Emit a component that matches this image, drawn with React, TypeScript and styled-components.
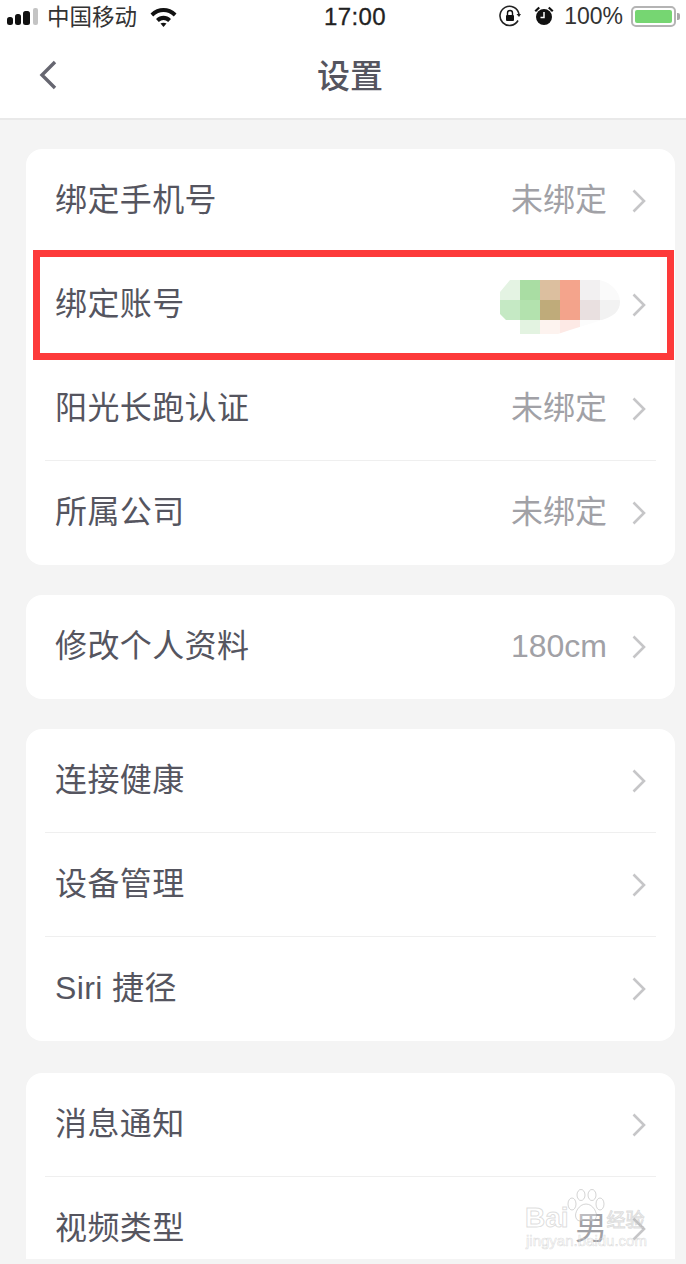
import React from "react";
import styled, { createGlobalStyle } from "styled-components";

interface RowData {
  label: string;
  value?: string;
  masked?: boolean;
}

const GlobalStyle = createGlobalStyle`
  html, body {
    margin: 0;
    padding: 0;
    background: #f4f4f4;
  }
  * {
    box-sizing: border-box;
  }
`;

const Page = styled.div`
  position: relative;
  width: 686px;
  height: 1264px;
  overflow: hidden;
  background: #f4f4f4;
  font-family: "Liberation Sans", "Noto Sans CJK SC", sans-serif;
`;

const Top = styled.header`
  height: 120px;
  background: #fff;
  border-bottom: 2px solid #e9e9e9;
`;

const StatusBar = styled.div`
  height: 34px;
  display: flex;
  align-items: center;
  position: relative;
  padding: 0 0 0 7px;
  color: #1c1c1c;
`;

const Carrier = styled.span`
  font-size: 22.5px;
  margin-left: 8px;
  margin-bottom: 4px;
  font-family: "Noto Sans CJK SC", sans-serif;
  color: #333;
`;

const WifiIcon = styled.svg`
  margin-left: 13px;
`;

const Clock = styled.span`
  position: absolute;
  left: 324px;
  top: 3px;
  font-size: 24px;
  line-height: 28px;
  font-family: "Liberation Sans", sans-serif;
  letter-spacing: 0.4px;
  color: #222;
  -webkit-text-stroke: 0.3px #222;
`;

const StatusRight = styled.div`
  margin-left: auto;
  display: flex;
  align-items: center;
  padding-right: 6px;
  margin-bottom: 2px;
`;

const AlarmIcon = styled.svg`
  margin-left: 13px;
`;

const Percent = styled.span`
  font-size: 23px;
  margin-left: 10px;
  font-family: "Liberation Sans", sans-serif;
  color: #333;
`;

const Battery = styled.div`
  width: 45px;
  height: 21px;
  margin-left: 8px;
  padding: 2px;
  border: 2px solid #b4b4b4;
  border-radius: 5px;
  background: #fff;
`;

const BatteryFill = styled.div`
  height: 100%;
  background: #76d672;
  border-radius: 2px;
`;

const BatteryTip = styled.div`
  width: 3px;
  height: 7px;
  margin-left: 1px;
  background: #a8a8a8;
  border-radius: 0 2px 2px 0;
`;

const NavBar = styled.div`
  height: 84px;
  position: relative;
  display: flex;
  align-items: center;
  justify-content: center;
  padding-left: 14px;
  padding-bottom: 5px;
`;

const BackIcon = styled.svg`
  position: absolute;
  left: 38px;
  top: 26px;
`;

const Title = styled.h1`
  margin: 0;
  font-size: 33px;
  line-height: 44px;
  font-weight: 500;
  color: #55555f;
  font-family: "Noto Sans CJK SC", sans-serif;
`;

const Content = styled.main`
  height: 1139px;
  overflow: hidden;
  padding: 29px 11px 0 26px;
`;

const Card = styled.section<{ $gap: number }>`
  background: #fff;
  border-radius: 16px;
  margin-bottom: ${(p) => p.$gap}px;
`;

const Row = styled.div`
  height: 104px;
  margin: 0 19px;
  padding: 0 10px;
  display: flex;
  align-items: center;
  border-bottom: 1px solid #efefef;

  &:last-child {
    border-bottom: none;
  }
`;

const Label = styled.span`
  flex: 1;
  font-size: 32px;
  line-height: 44px;
  margin-bottom: 2px;
  color: #55555f;
  letter-spacing: 0.4px;
`;

const Value = styled.span`
  font-size: 32px;
  line-height: 44px;
  margin-bottom: 2px;
  color: #a1a1a6;
  margin-right: 25px;
`;

const MaskedValue = styled.svg`
  margin-right: 12px;
  margin-top: 4px;
`;

const Chevron = styled.svg`
  flex: none;
`;

const Highlight = styled.div`
  position: absolute;
  left: 33px;
  top: 250px;
  width: 641px;
  height: 110px;
  border: 7px solid #fd3a3a;
  pointer-events: none;
`;

const Watermark = styled.div`
  position: absolute;
  left: 524px;
  top: 1189px;
  width: 126px;
  height: 66px;
  pointer-events: none;
`;

const WatermarkPaw = styled.svg`
  position: absolute;
  left: 43px;
  top: 0;
`;

const WatermarkBrand = styled.div`
  position: absolute;
  left: 1px;
  top: 15px;
  display: flex;
  align-items: baseline;
  gap: 38px;
  font-size: 28px;
  line-height: 28px;
  font-weight: 700;
  color: rgba(255, 255, 255, 0.35);
  -webkit-text-stroke: 1px rgba(170, 170, 170, 0.4);
  white-space: nowrap;
`;

const WatermarkCn = styled.span`
  font-size: 19px;
  font-family: "Noto Sans CJK SC", sans-serif;
  font-weight: 400;
`;

const WatermarkUrl = styled.div`
  position: absolute;
  left: 2px;
  top: 42px;
  font-size: 15px;
  line-height: 20px;
  color: rgba(255, 255, 255, 0.3);
  -webkit-text-stroke: 0.6px rgba(170, 170, 170, 0.4);
  white-space: nowrap;
`;

const groups: { rows: RowData[]; gap: number }[] = [
  {
    gap: 30,
    rows: [
      { label: "绑定手机号", value: "未绑定" },
      { label: "绑定账号", masked: true },
      { label: "阳光长跑认证", value: "未绑定" },
      { label: "所属公司", value: "未绑定" },
    ],
  },
  { gap: 30, rows: [{ label: "修改个人资料", value: "180cm" }] },
  {
    gap: 32,
    rows: [{ label: "连接健康" }, { label: "设备管理" }, { label: "Siri 捷径" }],
  },
  {
    gap: 0,
    rows: [{ label: "消息通知" }, { label: "视频类型", value: "男" }],
  },
];

// mosaic over the bound account name
const mosaic = [
  ["#e4f3e3", "#a9dda3", "#dcbf9f", "#f4a48c", "#f2f0f1", "#fafafa"],
  ["#c5e9c4", "#b3e2ae", "#bfab7a", "#f3a38b", "#e9e0e0", "#f2f2f2"],
  ["#ffffff", "#e3f3e1", "#fdf3ef", "#fde9e5", "#fcfcfc", "#ffffff"],
];

const Mosaic: React.FC = () => (
  <MaskedValue width="120" height="54" viewBox="0 0 120 54">
    <defs>
      <clipPath id="blob">
        <path d="M10 0H100C112 3 120 12 120 22C120 32 112 37 102 40L70 50L58 54H20V40H6L0 34V12Z" />
      </clipPath>
    </defs>
    <g clipPath="url(#blob)">
      {mosaic.map((cells, y) =>
        cells.map((fill, x) => (
          <rect key={`${x}-${y}`} x={x * 20} y={y * 20} width="20" height="20" fill={fill} />
        ))
      )}
    </g>
  </MaskedValue>
);

const RowChevron: React.FC = () => (
  <Chevron width="14" height="24" viewBox="0 0 14 24">
    <path d="M1.5 1.5L12 12L1.5 22.5" fill="none" stroke="#c6c6c8" strokeWidth="2.6" />
  </Chevron>
);

const App: React.FC = () => {
  return (
    <Page>
      <GlobalStyle />
      <Top>
        <StatusBar>
          <svg width="32" height="18" viewBox="0 0 32 18">
            <rect x="0" y="9" width="6" height="8" rx="2.5" fill="#111" />
            <rect x="8" y="6" width="6" height="11" rx="2.5" fill="#111" />
            <rect x="16" y="3" width="7" height="14" rx="2.5" fill="#111" />
            <rect x="26" y="0" width="5" height="17" rx="2" fill="#c4c4c4" />
          </svg>
          <Carrier>中国移动</Carrier>
          <WifiIcon width="27" height="20" viewBox="0 0 27 20">
            <path d="M0.5 6.5C8 -0.8 19 -0.8 26.5 6.5L23.8 9.4C17.6 3.6 9.4 3.6 3.2 9.4Z" fill="#111" />
            <path d="M6 12C10.4 7.8 16.6 7.8 21 12L18.2 15C15.2 12.3 11.8 12.3 8.8 15Z" fill="#111" />
            <path d="M10.5 16.6C12.2 15.3 14.8 15.3 16.5 16.6L13.5 20Z" fill="#111" />
          </WifiIcon>
          <Clock>17:00</Clock>
          <StatusRight>
            <svg width="22" height="22" viewBox="0 0 22 22">
              <path d="M19 15.5A9.6 9.6 0 1 1 20 9" fill="none" stroke="#222" strokeWidth="1.6" />
              <path d="M17.5 9H22L20 12Z" fill="#222" />
              <rect x="7" y="10" width="8" height="6" rx="1" fill="#111" />
              <path d="M8.5 10V8A2.5 2.5 0 0 1 13.5 8V10" fill="none" stroke="#111" strokeWidth="1.4" />
            </svg>
            <AlarmIcon width="20" height="20" viewBox="0 0 20 20">
              <circle cx="10" cy="11" r="8" fill="#111" />
              <path d="M10 6V11.5H6.5" fill="none" stroke="#fff" strokeWidth="1.5" />
              <path d="M0.5 4.5L4.5 0.8L6 2.2L2 6Z" fill="#111" />
              <path d="M19.5 4.5L15.5 0.8L14 2.2L18 6Z" fill="#111" />
            </AlarmIcon>
            <Percent>100%</Percent>
            <Battery>
              <BatteryFill />
            </Battery>
            <BatteryTip />
          </StatusRight>
        </StatusBar>
        <NavBar>
          <BackIcon width="20" height="30" viewBox="0 0 20 30">
            <path d="M17 2L4 15L17 28" fill="none" stroke="#666670" strokeWidth="3.4" />
          </BackIcon>
          <Title>设置</Title>
        </NavBar>
      </Top>
      <Content>
        {groups.map((group, i) => (
          <Card key={i} $gap={group.gap}>
            {group.rows.map((row) => (
              <Row key={row.label}>
                <Label>{row.label}</Label>
                {row.value && <Value>{row.value}</Value>}
                {row.masked && <Mosaic />}
                <RowChevron />
              </Row>
            ))}
          </Card>
        ))}
      </Content>
      <Highlight />
      <Watermark>
        <WatermarkPaw width="38" height="36" viewBox="0 0 38 36">
          <g fill="rgba(255,255,255,0.3)" stroke="rgba(170,170,170,0.5)" strokeWidth="1">
            <ellipse cx="5" cy="15" rx="4" ry="6" />
            <ellipse cx="14" cy="6" rx="4" ry="5.5" />
            <ellipse cx="25" cy="6" rx="4" ry="5.5" />
            <ellipse cx="33" cy="15" rx="4" ry="6" />
            <path d="M19 15C26 15 31 24 29 29C27 34 22 31 19 31C16 31 11 34 9 29C7 24 12 15 19 15Z" />
          </g>
        </WatermarkPaw>
        <WatermarkBrand>
          <span>Bai</span>
          <WatermarkCn>经验</WatermarkCn>
        </WatermarkBrand>
        <WatermarkUrl>jingyan.baidu.com</WatermarkUrl>
      </Watermark>
    </Page>
  );
};

export default App;
